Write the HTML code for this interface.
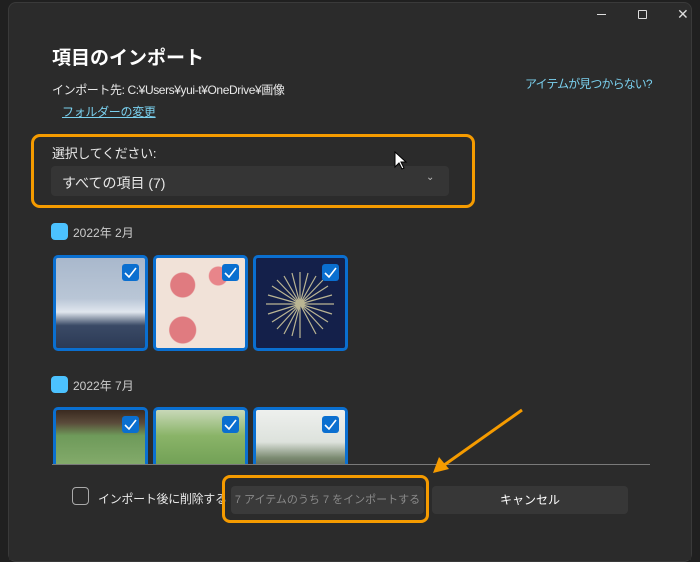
<!DOCTYPE html>
<html><head><meta charset="utf-8"><style>
*{margin:0;padding:0;box-sizing:border-box}
body{width:700px;height:555px;background:#202020;overflow:hidden;position:relative;font-family:"Liberation Sans","Noto Sans CJK JP",sans-serif;color:#e8e8e8}
.win{position:absolute;left:8px;top:2px;width:684px;height:560px;background:#2b2b2b;border:1px solid #3a3a3a;border-radius:8px}
.a{position:absolute;white-space:nowrap}
.thumb{position:absolute;width:95px;height:96px;border:3px solid #0a6fd0;border-radius:5px;overflow:hidden}
.ck{position:absolute;right:6px;top:6px;width:17px;height:17px;background:#0a6fd0;border-radius:3px}
.ck svg{position:absolute;left:2px;top:3px}
.sq{position:absolute;width:17px;height:17px;background:#4cc2ff;border-radius:4px}
</style></head><body>
<div class="win"></div>
<div class="a" style="left:597px;top:14px;width:9px;height:1px;background:#ddd"></div>
<div class="a" style="left:638px;top:10px;width:9px;height:9px;border:1px solid #ddd;border-radius:1px"></div>
<div class="a" style="left:677px;top:6px;font-size:14px;color:#ddd">✕</div>
<div class="a" style="left:52px;top:43px;font-size:19px;font-weight:bold;color:#fff">項目のインポート</div>
<div class="a" style="left:52px;top:81px;font-size:12px;letter-spacing:-0.4px">インポート先: C:¥Users¥yui-t¥OneDrive¥画像</div>
<div class="a" style="left:62px;top:103px;font-size:12px;color:#7ad0ee;text-decoration:underline;letter-spacing:-0.3px">フォルダーの変更</div>
<div class="a" style="left:525px;top:75px;font-size:12px;color:#7ad0ee;letter-spacing:-0.9px">アイテムが見つからない?</div>
<div class="a" style="left:31px;top:134px;width:444px;height:74px;border:3px solid #f59b00;border-radius:9px"></div>
<div class="a" style="left:52px;top:143px;font-size:13px;letter-spacing:-0.3px">選択してください:</div>
<div class="a" style="left:51px;top:166px;width:398px;height:30px;background:#353535;border-radius:4px"></div>
<div class="a" style="left:62px;top:173px;font-size:14px">すべての項目 (7)</div>
<div class="a" style="left:426px;top:172px;font-size:10px;color:#bbb">⌄</div>
<svg class="a" style="left:394px;top:151px" width="14" height="20"><path d="M1 1 L1 16 L5 12 L8 18 L10 17 L7 11 L12 11 Z" fill="#fff" stroke="#000" stroke-width="1"/></svg>
<div class="sq" style="left:51px;top:223px"></div>
<div class="a" style="left:73px;top:224px;font-size:12px;color:#ccc">2022年 2月</div>
<div class="thumb" style="left:53px;top:255px;background:linear-gradient(180deg,#a9b8cc 0%,#b9c6d6 45%,#e0e6ee 60%,#3a4a66 75%,#2c3a55 100%)"><div class="ck"><svg width="13" height="11"><path d="M1 6 L5 10 L12 1" stroke="#fff" stroke-width="1.6" fill="none"/></svg></div></div>
<div class="thumb" style="left:153px;top:255px;background:radial-gradient(circle at 30% 30%,#e07b80 0,#e07b80 12px,transparent 13px),radial-gradient(circle at 30% 80%,#e07b80 0,#e07b80 13px,transparent 14px),radial-gradient(circle at 70% 20%,#e8858a 0,#e8858a 9px,transparent 10px),#f1e2d8"><div class="ck"><svg width="13" height="11"><path d="M1 6 L5 10 L12 1" stroke="#fff" stroke-width="1.6" fill="none"/></svg></div></div>
<div class="thumb" style="left:253px;top:255px;background:#14204a"><svg width="89" height="90" style="position:absolute;left:0;top:0"><g stroke="#d8cfa0" stroke-width="1.2" opacity="0.85">
<path d="M44 46 L44 14 M44 46 L60 18 M44 46 L72 28 M44 46 L78 46 M44 46 L72 64 M44 46 L60 76 M44 46 L44 80 M44 46 L28 76 M44 46 L16 64 M44 46 L10 46 M44 46 L16 28 M44 46 L28 18 M44 46 L52 15 M44 46 L67 22 M44 46 L76 37 M44 46 L76 56 M44 46 L67 71 M44 46 L36 78 M44 46 L21 71 M44 46 L12 56 M44 46 L12 37 M44 46 L21 22 M44 46 L36 15"/></g></svg><div class="ck"><svg width="13" height="11"><path d="M1 6 L5 10 L12 1" stroke="#fff" stroke-width="1.6" fill="none"/></svg></div></div>
<div class="sq" style="left:51px;top:376px"></div>
<div class="a" style="left:73px;top:377px;font-size:12px;color:#ccc">2022年 7月</div>
<div class="thumb" style="left:53px;top:407px;height:70px;background:linear-gradient(180deg,#3a2a20 0,#5a4a3a 20%,#6e9a5a 40%,#8ab070 100%)"><div class="ck"><svg width="13" height="11"><path d="M1 6 L5 10 L12 1" stroke="#fff" stroke-width="1.6" fill="none"/></svg></div></div>
<div class="thumb" style="left:153px;top:407px;height:70px;background:linear-gradient(180deg,#c8d8b8 0,#8ab468 40%,#6a9a50 100%)"><div class="ck"><svg width="13" height="11"><path d="M1 6 L5 10 L12 1" stroke="#fff" stroke-width="1.6" fill="none"/></svg></div></div>
<div class="thumb" style="left:253px;top:407px;height:70px;background:linear-gradient(180deg,#eef0ee 0,#dde2dc 50%,#7a8a70 75%,#4a4a40 100%)"><div class="ck"><svg width="13" height="11"><path d="M1 6 L5 10 L12 1" stroke="#fff" stroke-width="1.6" fill="none"/></svg></div></div>
<div class="a" style="left:9px;top:465px;width:682px;height:95px;background:#2b2b2b"></div>
<div class="a" style="left:52px;top:464px;width:598px;height:1px;background:#7a7a7a"></div>
<div class="a" style="left:72px;top:487px;width:17px;height:18px;border:1px solid #aaa;border-radius:4px"></div>
<div class="a" style="left:98px;top:490px;font-size:12px;letter-spacing:-0.3px">インポート後に削除する</div>
<div class="a" style="left:231px;top:486px;width:193px;height:28px;background:#3a3a3a;border-radius:4px;font-size:11px;color:#8a8a8a;text-align:center;line-height:28px">7 アイテムのうち 7 をインポートする</div>
<div class="a" style="left:222px;top:475px;width:207px;height:48px;border:3px solid #f59b00;border-radius:8px"></div>
<div class="a" style="left:432px;top:486px;width:196px;height:28px;background:#373737;border-radius:4px;font-size:12px;color:#fff;text-align:center;line-height:28px">キャンセル</div>
<svg class="a" style="left:425px;top:405px" width="105" height="75"><path d="M97 5 L15 63" stroke="#f59b00" stroke-width="3" fill="none"/><path d="M8 68 L14 52 L24 64 Z" fill="#f59b00"/></svg>
</body></html>
